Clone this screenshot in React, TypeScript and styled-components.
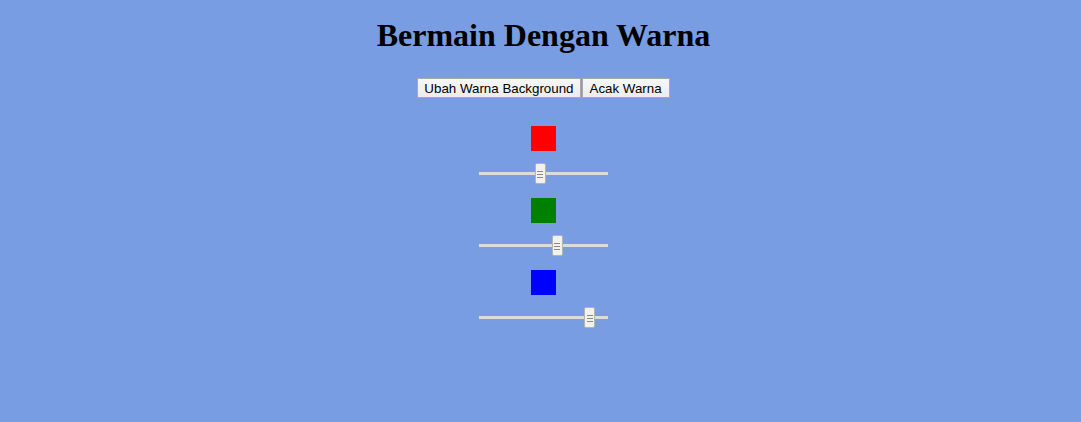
import React, { useState } from "react";
import styled, { createGlobalStyle } from "styled-components";

const GlobalStyle = createGlobalStyle`
  html, body {
    margin: 0;
    padding: 0;
  }
  body {
    background: #789de2;
    font-family: "Liberation Serif", "Times New Roman", serif;
    min-height: 422px;
  }
`;

const Page = styled.div`
  display: flex;
  flex-direction: column;
  align-items: center;
  padding-top: 17px;
  padding-left: 6px;
`;

const Title = styled.h1`
  margin: 0;
  font-family: "Liberation Serif", "Times New Roman", serif;
  font-size: 32px;
  font-weight: 700;
  line-height: 36px;
  color: #000;
`;

const ButtonRow = styled.div`
  display: flex;
  margin-top: 25px;
`;

const Button = styled.button`
  height: 20px;
  padding: 0 6px;
  margin: 0;
  font-family: "Liberation Sans", Arial, sans-serif;
  font-size: 13.33px;
  color: #000;
  background: linear-gradient(#f7f7f7, #ececec);
  border: 1px solid #a8a8a8;
  border-radius: 0;
  cursor: pointer;
  & + & {
    margin-left: 1px;
    padding: 0 7px;
  }
`;

const Groups = styled.div`
  display: flex;
  flex-direction: column;
  align-items: center;
  margin-top: 28px;
`;

const Group = styled.div`
  display: flex;
  flex-direction: column;
  align-items: center;
  gap: 12px;
  margin-bottom: 14px;
`;

const Swatch = styled.div<{ $color: string }>`
  width: 25px;
  height: 25px;
  background: ${(p) => p.$color};
`;

const Slider = styled.input`
  -webkit-appearance: none;
  appearance: none;
  display: block;
  width: 129px;
  height: 21px;
  margin: 0;
  background: transparent;
  cursor: pointer;

  &::-webkit-slider-runnable-track {
    height: 3px;
    background: #dcdcdc;
    border: none;
  }

  &::-webkit-slider-thumb {
    -webkit-appearance: none;
    appearance: none;
    width: 11px;
    height: 21px;
    margin-top: -9px;
    border: 1px solid #b3b3b3;
    border-radius: 2px;
    box-sizing: border-box;
    background:
      linear-gradient(#8a8a8a, #8a8a8a) center 7px / 6px 1px no-repeat,
      linear-gradient(#8a8a8a, #8a8a8a) center 10px / 6px 1px no-repeat,
      linear-gradient(#8a8a8a, #8a8a8a) center 13px / 6px 1px no-repeat,
      #f3f1ec;
  }

  &:focus {
    outline: none;
  }
`;

const channels = [
  { color: "#ff0000", start: 120 },
  { color: "#008000", start: 157 },
  { color: "#0000ff", start: 227 },
];

export default function App() {
  const [values, setValues] = useState(channels.map((c) => c.start));

  const update = (i: number, v: number) =>
    setValues((prev) => prev.map((p, j) => (j === i ? v : p)));

  return (
    <>
      <GlobalStyle />
      <Page>
        <Title>Bermain Dengan Warna</Title>
        <ButtonRow>
          <Button>Ubah Warna Background</Button>
          <Button>Acak Warna</Button>
        </ButtonRow>
        <Groups>
          {channels.map((c, i) => (
            <Group key={c.color}>
              <Swatch $color={c.color} />
              <Slider
                type="range"
                min={0}
                max={255}
                value={values[i]}
                onChange={(e) => update(i, Number(e.target.value))}
              />
            </Group>
          ))}
        </Groups>
      </Page>
    </>
  );
}
